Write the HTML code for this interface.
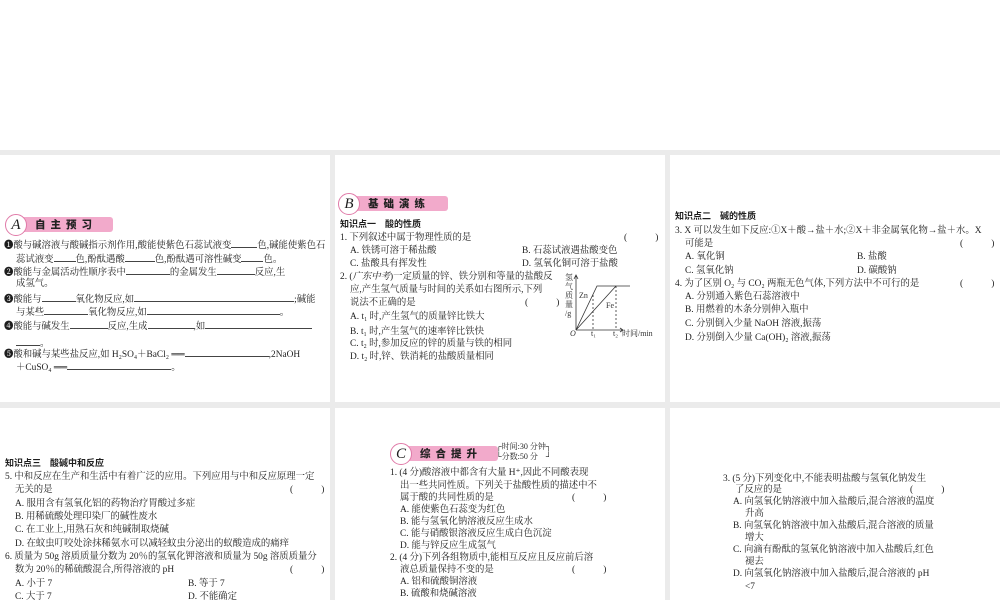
<!DOCTYPE html>
<html><head><meta charset="utf-8"><style>
body{margin:0;width:1000px;height:600px;background:#fff;position:relative;overflow:hidden;font-family:"Liberation Serif","Noto Serif CJK SC",serif;color:#1e1e1e}
.g{position:absolute;background:#ebebeb}
.t{position:absolute;white-space:nowrap;font-size:9.4px;line-height:12px}
.h{font-family:"Liberation Sans","Noto Sans CJK SC",sans-serif;font-weight:bold;font-size:9px}
.u{display:inline-block;border-bottom:1px solid #444;height:9px;vertical-align:baseline}
.badge{position:absolute;height:20px}
.badge .bar{position:absolute;left:14px;top:3px;height:15px;background:#f2aacb;border-radius:3px;font-family:"Noto Sans CJK SC",sans-serif;font-weight:900;font-size:10.5px;line-height:15px;letter-spacing:5px;padding-left:16px;color:#222}
.badge .c{position:absolute;left:0;top:0;width:20px;height:20px;border:1.5px solid #e07aa8;border-radius:50%;background:#fff;font-style:italic;font-size:15px;line-height:20px;text-align:center;font-family:"Liberation Serif",serif}
</style></head><body>
<div class="g" style="left:0;top:150px;width:1000px;height:5px"></div>
<div class="g" style="left:330px;top:150px;width:5px;height:450px"></div>
<div class="g" style="left:665px;top:150px;width:5px;height:450px"></div>
<div class="g" style="left:0;top:402px;width:1000px;height:6px"></div>

<div class="badge" style="left:5px;top:214px"><div class="bar" style="width:78px">自主预习</div><div class="c">A</div></div>
<div class="t" style="left:4px;top:238px">❶酸与碱溶液与酸碱指示剂作用,酸能使紫色石蕊试液变<span class="u" style="width:26px"></span>色,碱能使紫色石</div>
<div class="t" style="left:16px;top:252px">蕊试液变<span class="u" style="width:22px"></span>色,酚酞遇酸<span class="u" style="width:30px"></span>色,酚酞遇可溶性碱变<span class="u" style="width:22px"></span>色。</div>
<div class="t" style="left:4px;top:265px">❷酸能与金属活动性顺序表中<span class="u" style="width:44px"></span>的金属发生<span class="u" style="width:38px"></span>反应,生</div>
<div class="t" style="left:16px;top:278px">成氢气。</div>
<div class="t" style="left:4px;top:292px">❸酸能与<span class="u" style="width:34px"></span>氧化物反应,如<span class="u" style="width:160px"></span>;碱能</div>
<div class="t" style="left:16px;top:305px">与某些<span class="u" style="width:44px"></span>氧化物反应,如<span class="u" style="width:133px"></span>。</div>
<div class="t" style="left:4px;top:319px">❹酸能与碱发生<span class="u" style="width:38px"></span>反应,生成<span class="u" style="width:46px"></span>,如<span class="u" style="width:107px"></span></div>
<div class="t" style="left:16px;top:336px"><span class="u" style="width:24px"></span>。</div>
<div class="t" style="left:4px;top:347px">❺酸和碱与某些盐反应,如 H₂SO₄＋BaCl₂ ══<span class="u" style="width:84px"></span>,2NaOH</div>
<div class="t" style="left:16px;top:360px">＋CuSO₄ ══<span class="u" style="width:104px"></span>。</div>

<div class="badge" style="left:338px;top:193px"><div class="bar" style="width:80px">基础演练</div><div class="c">B</div></div>
<div class="t h" style="left:340px;top:218px">知识点一　酸的性质</div>
<div class="t" style="left:340px;top:232px">1. 下列叙述中属于物理性质的是</div>
<div class="t" style="left:624px;top:232px">(　　　)</div>
<div class="t" style="left:350px;top:245px">A. 铁锈可溶于稀盐酸</div>
<div class="t" style="left:522px;top:245px">B. 石蕊试液遇盐酸变色</div>
<div class="t" style="left:350px;top:258px">C. 盐酸具有挥发性</div>
<div class="t" style="left:522px;top:258px">D. 氢氧化铜可溶于盐酸</div>
<div class="t" style="left:340px;top:271px">2. (<i>广东中考</i>)一定质量的锌、铁分别和等量的盐酸反</div>
<div class="t" style="left:350px;top:284px">应,产生氢气质量与时间的关系如右图所示,下列</div>
<div class="t" style="left:350px;top:297px">说法不正确的是</div>
<div class="t" style="left:525px;top:297px">(　　　)</div>
<div class="t" style="left:350px;top:311px">A. t₁ 时,产生氢气的质量锌比铁大</div>
<div class="t" style="left:350px;top:326px">B. t₁ 时,产生氢气的速率锌比铁快</div>
<div class="t" style="left:350px;top:338px">C. t₂ 时,参加反应的锌的质量与铁的相同</div>
<div class="t" style="left:350px;top:351px">D. t₂ 时,锌、铁消耗的盐酸质量相同</div>
<svg style="position:absolute;left:560px;top:270px" width="105" height="70">
<g stroke="#333" fill="none" stroke-width="0.8">
<path d="M16 60V6M14 9l2-4 2 4M16 60H62M60 58l3 2-3 2"/>
<path d="M16 60L37 16H70M16 60L56 16"/>
<path d="M33 25V60M56 16V60" stroke-dasharray="2 2"/>
</g>
<g font-size="8" fill="#333" font-family="Liberation Serif,Noto Serif CJK SC,serif">
<text x="5" y="10">氢</text><text x="5" y="19">气</text><text x="5" y="28">质</text><text x="5" y="37">量</text><text x="5" y="46">/g</text>
<text x="19" y="28">Zn</text><text x="46" y="38">Fe</text>
<text x="10" y="66" font-style="italic">O</text><text x="31" y="66">t₁</text><text x="53" y="66">t₂</text>
<text x="62" y="66">时间/min</text>
</g></svg>

<div class="t h" style="left:675px;top:210px">知识点二　碱的性质</div>
<div class="t" style="left:675px;top:225px">3. X 可以发生如下反应:①X＋酸→盐＋水;②X＋非金属氧化物→盐＋水。X</div>
<div class="t" style="left:685px;top:238px">可能是</div>
<div class="t" style="left:960px;top:238px">(　　　)</div>
<div class="t" style="left:685px;top:251px">A. 氧化铜</div>
<div class="t" style="left:857px;top:251px">B. 盐酸</div>
<div class="t" style="left:685px;top:265px">C. 氢氧化钠</div>
<div class="t" style="left:857px;top:265px">D. 碳酸钠</div>
<div class="t" style="left:675px;top:278px">4. 为了区别 O₂ 与 CO₂ 两瓶无色气体,下列方法中不可行的是</div>
<div class="t" style="left:960px;top:278px">(　　　)</div>
<div class="t" style="left:685px;top:291px">A. 分别通入紫色石蕊溶液中</div>
<div class="t" style="left:685px;top:304px">B. 用燃着的木条分别伸入瓶中</div>
<div class="t" style="left:685px;top:318px">C. 分别倒入少量 NaOH 溶液,振荡</div>
<div class="t" style="left:685px;top:332px">D. 分别倒入少量 Ca(OH)₂ 溶液,振荡</div>

<div class="t h" style="left:5px;top:457px">知识点三　酸碱中和反应</div>
<div class="t" style="left:5px;top:471px">5. 中和反应在生产和生活中有着广泛的应用。下列应用与中和反应原理一定</div>
<div class="t" style="left:15px;top:484px">无关的是</div>
<div class="t" style="left:290px;top:484px">(　　　)</div>
<div class="t" style="left:15px;top:498px">A. 服用含有氢氧化铝的药物治疗胃酸过多症</div>
<div class="t" style="left:15px;top:511px">B. 用稀硫酸处理印染厂的碱性废水</div>
<div class="t" style="left:15px;top:524px">C. 在工业上,用熟石灰和纯碱制取烧碱</div>
<div class="t" style="left:15px;top:538px">D. 在蚊虫叮咬处涂抹稀氨水可以减轻蚊虫分泌出的蚁酸造成的痛痒</div>
<div class="t" style="left:5px;top:551px">6. 质量为 50g 溶质质量分数为 20％的氢氧化钾溶液和质量为 50g 溶质质量分</div>
<div class="t" style="left:15px;top:564px">数为 20％的稀硫酸混合,所得溶液的 pH</div>
<div class="t" style="left:290px;top:564px">(　　　)</div>
<div class="t" style="left:15px;top:578px">A. 小于 7</div>
<div class="t" style="left:188px;top:578px">B. 等于 7</div>
<div class="t" style="left:15px;top:591px">C. 大于 7</div>
<div class="t" style="left:188px;top:591px">D. 不能确定</div>

<div class="badge" style="left:390px;top:443px"><div class="bar" style="width:78px">综合提升</div><div class="c">C</div></div>
<div class="t" style="left:496px;top:442px;font-size:8px;line-height:10px">┌时间:30 分钟┐<br>└分数:50 分　┘</div>
<div class="t" style="left:390px;top:467px">1. (4 分)酸溶液中都含有大量 H⁺,因此不同酸表现</div>
<div class="t" style="left:400px;top:480px">出一些共同性质。下列关于盐酸性质的描述中不</div>
<div class="t" style="left:400px;top:492px">属于酸的共同性质的是</div>
<div class="t" style="left:572px;top:492px">(　　　)</div>
<div class="t" style="left:400px;top:504px">A. 能使紫色石蕊变为红色</div>
<div class="t" style="left:400px;top:516px">B. 能与氢氧化钠溶液反应生成水</div>
<div class="t" style="left:400px;top:528px">C. 能与硝酸银溶液反应生成白色沉淀</div>
<div class="t" style="left:400px;top:540px">D. 能与锌反应生成氢气</div>
<div class="t" style="left:390px;top:552px">2. (4 分)下列各组物质中,能相互反应且反应前后溶</div>
<div class="t" style="left:400px;top:564px">液总质量保持不变的是</div>
<div class="t" style="left:572px;top:564px">(　　　)</div>
<div class="t" style="left:400px;top:576px">A. 铝和硫酸铜溶液</div>
<div class="t" style="left:400px;top:588px">B. 硫酸和烧碱溶液</div>

<div class="t" style="left:723px;top:473px">3. (5 分)下列变化中,不能表明盐酸与氢氧化钠发生</div>
<div class="t" style="left:735px;top:484px">了反应的是</div>
<div class="t" style="left:910px;top:484px">(　　　)</div>
<div class="t" style="left:733px;top:496px">A. 向氢氧化钠溶液中加入盐酸后,混合溶液的温度</div>
<div class="t" style="left:745px;top:508px">升高</div>
<div class="t" style="left:733px;top:520px">B. 向氢氧化钠溶液中加入盐酸后,混合溶液的质量</div>
<div class="t" style="left:745px;top:532px">增大</div>
<div class="t" style="left:733px;top:544px">C. 向滴有酚酞的氢氧化钠溶液中加入盐酸后,红色</div>
<div class="t" style="left:745px;top:556px">褪去</div>
<div class="t" style="left:733px;top:568px">D. 向氢氧化钠溶液中加入盐酸后,混合溶液的 pH</div>
<div class="t" style="left:745px;top:581px">&lt;7</div>
</body></html>
